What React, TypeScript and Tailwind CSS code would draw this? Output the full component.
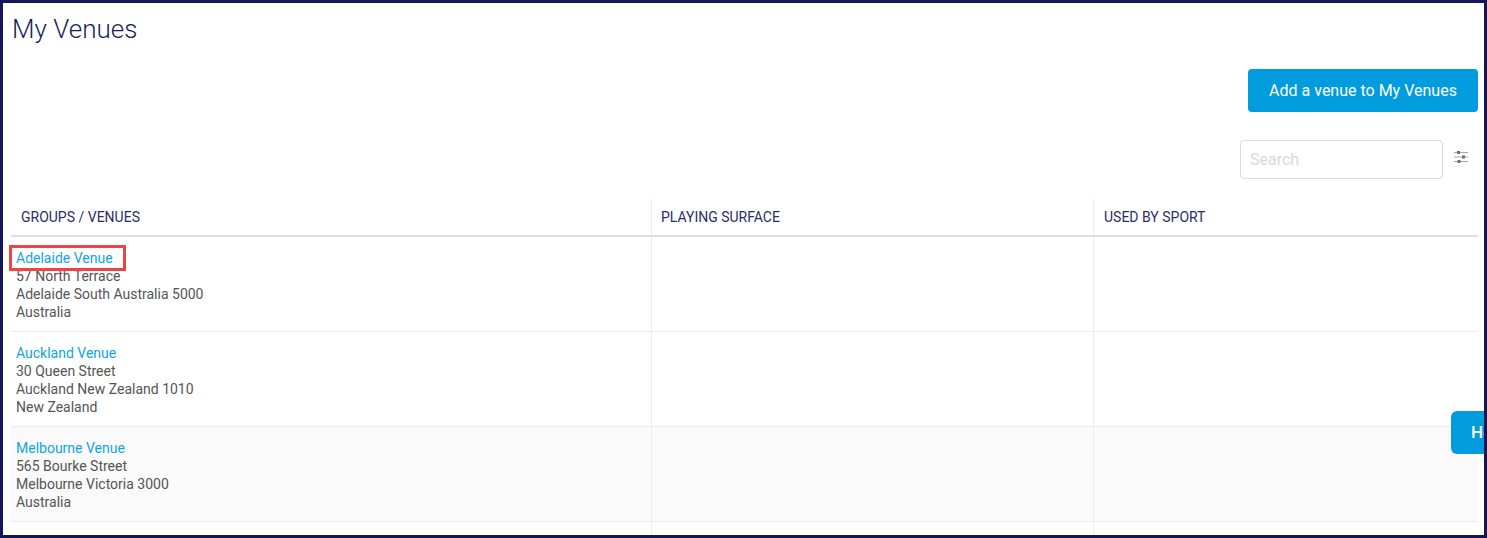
const venues = [
  { name: "Adelaide Venue", street: "57 North Terrace", city: "Adelaide South Australia 5000", country: "Australia" },
  { name: "Auckland Venue", street: "30 Queen Street", city: "Auckland New Zealand 1010", country: "New Zealand" },
  { name: "Melbourne Venue", street: "565 Bourke Street", city: "Melbourne Victoria 3000", country: "Australia" },
];

const FilterIcon = () => (
  <svg width="14" height="14" viewBox="0 0 14 14" className="text-[#6b6f80]">
    <path d="M0 2.5h14M0 7h14M0 11.5h14" stroke="currentColor" strokeWidth="1" opacity="0.6" />
    <rect x="3" y="1" width="3" height="3" fill="currentColor" />
    <rect x="8" y="5.5" width="3" height="3" fill="currentColor" />
    <rect x="3.5" y="10" width="3" height="3" fill="currentColor" />
  </svg>
);

export default function App() {
  return (
    <div className="relative h-[538px] w-[1487px] overflow-hidden border-[3px] border-[#13175a] bg-white font-['Roboto',sans-serif]">
      <div className="flex h-full flex-col pl-[8px] pr-[6px]">
        <h1 className="mt-[8px] pl-[1px] text-[26px] leading-[36px] font-light text-[#1b1f5e]">My Venues</h1>

        <div className="mt-[22px] flex justify-end">
          <button className="h-[43px] w-[230px] rounded-[4px] bg-[#009cde] text-[16px] font-normal text-white">
            Add a venue to My Venues
          </button>
        </div>

        <div className="mt-[28px] flex items-center justify-end pr-[10px]">
          <input
            placeholder="Search"
            className="h-[39px] w-[203px] rounded-[4px] border border-[#dcdcdc] px-[9px] text-[16px] placeholder:text-[#d9d9d9]"
          />
          <span className="ml-[11px] flex w-[14px] -translate-y-[3px]">
            <FilterIcon />
          </span>
        </div>

        <div className="mt-[20px] flex flex-col">
          <div className="grid h-[38px] grid-cols-[641px_442px_383px] border-b-2 border-[#e0e0e0] text-[14px] text-[#2b2d66]">
            <div className="flex items-center border-r border-[#ececec] pl-[10px]">GROUPS / VENUES</div>
            <div className="flex items-center border-r border-[#ececec] pl-[9px]">PLAYING SURFACE</div>
            <div className="flex items-center pl-[10px]">USED BY SPORT</div>
          </div>

          {venues.map((venue, i) => (
            <div
              key={venue.name}
              className={`grid h-[95px] grid-cols-[641px_442px_383px] border-b border-[#ececec] ${i === 2 ? "bg-[#fafafa]" : "bg-white"}`}
            >
              <div className="border-r border-[#ececec] pt-[12px] pl-[5px] text-[14px] leading-[18px] text-[#555555]">
                <a className="block text-[#0ea5e4]">{venue.name}</a>
                <div>{venue.street}</div>
                <div>{venue.city}</div>
                <div>{venue.country}</div>
              </div>
              <div className="border-r border-[#ececec]" />
              <div />
            </div>
          ))}

          <div className="grid h-[30px] grid-cols-[641px_442px_383px]">
            <div className="border-r border-[#ececec]" />
            <div className="border-r border-[#ececec]" />
            <div />
          </div>
        </div>
      </div>

      {/* annotation box around the first venue */}
      <div className="absolute top-[242px] left-[6px] h-[26px] w-[117px] border-[3px] border-[#f04444]" />

      {/* help tab, cut off by the window edge */}
      <div className="absolute top-[408px] left-[1448px] flex h-[43px] w-[60px] items-center rounded-[6px] bg-[#009cde] pl-[20px] text-[17px] font-medium text-white">
        Help
      </div>
    </div>
  );
}
